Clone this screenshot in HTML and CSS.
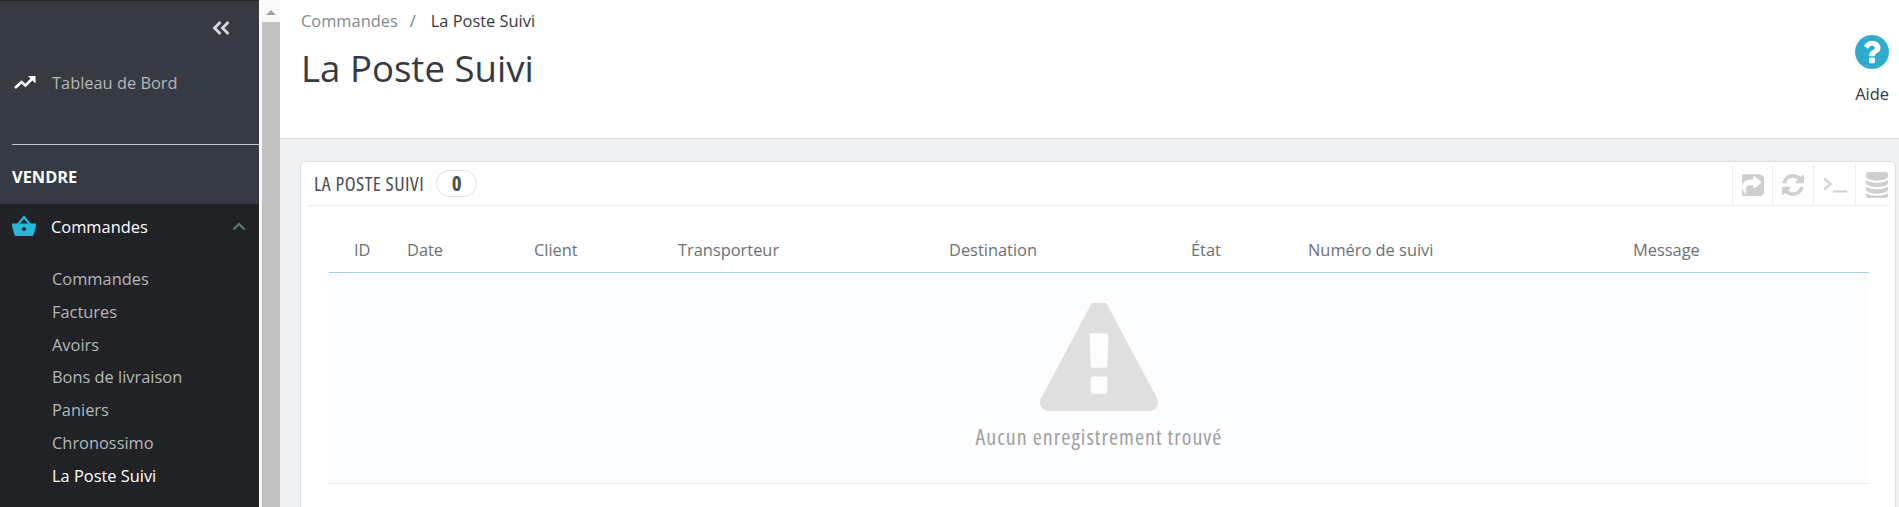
FILE: index.html
```html
<!DOCTYPE html>
<html lang="fr">
<head>
<meta charset="utf-8">
<title>La Poste Suivi</title>
<link rel="stylesheet" href="styles.css">
</head>
<body>
<div class="app">
  <nav class="sidebar">
    <div class="side-top">
      <div class="collapse"><svg width="19" height="14" viewBox="0 0 19 14"><path d="M8.500 1 2.500 7l6 6M16.500 1 10.500 7l6 6" fill="none" stroke="#d5d8dc" stroke-width="2.800"/></svg></div>
      <a class="dash"><svg class="dash-ico" width="22" height="14" viewBox="0 0 22 14"><path d="M1 13 7.500 7l4 3.500L19 3" fill="none" stroke="#fff" stroke-width="2.600"/><path d="M14 1h7.500v7.500z" fill="#fff"/></svg><span>Tableau de Bord</span></a>
      <div class="divider"></div>
      <div class="section">VENDRE</div>
    </div>
    <div class="side-active">
      <a class="parent">
        <svg class="basket" width="26" height="22" viewBox="0 0 26 22"><path d="M7 9.500 13 2l6 7.500" fill="none" stroke="#25b9d7" stroke-width="2.200"/><path d="M1 8.500h24v2.500l-2.500 9q-.3 1-1.500 1H5q-1.200 0-1.500-1L1 11z" fill="#25b9d7"/><circle cx="13" cy="14" r="2" fill="#202226"/></svg>
        <span class="parent-label">Commandes</span>
        <svg class="chev" width="14" height="9" viewBox="0 0 14 9"><path d="M1.500 7.500 7 2l5.500 5.500" fill="none" stroke="#5f7680" stroke-width="2"/></svg>
      </a>
      <ul class="sub">
        <li>Commandes</li>
        <li>Factures</li>
        <li>Avoirs</li>
        <li>Bons de livraison</li>
        <li>Paniers</li>
        <li>Chronossimo</li>
        <li class="current">La Poste Suivi</li>
      </ul>
    </div>
  </nav>
  <div class="scrollbar">
    <div class="scroll-up"><span class="arrow"></span></div>
    <div class="thumb"></div>
  </div>
  <main class="main">
    <header class="head">
      <div class="head-left">
        <div class="crumbs"><span class="crumb-link">Commandes</span><span class="crumb-sep">/</span><span class="crumb-cur">La Poste Suivi</span></div>
        <h1 class="title">La Poste Suivi</h1>
      </div>
      <a class="help">
        <svg width="34" height="34" viewBox="128 128 1536 1536"><path fill="#2eacce" d="M1024 1376v-192q0-14-9-23t-23-9h-192q-14 0-23 9t-9 23v192q0 14 9 23t23 9h192q14 0 23-9t9-23zm256-672q0-88-55.500-163t-138.500-116-170-41q-243 0-371 213-15 24 8 42l132 100q7 6 19 6 16 0 25-12 53-68 86-92 34-24 86-24 48 0 85.500 26t37.500 59q0 38-20 61t-68 45q-63 28-115.500 86.500t-52.500 125.500v36q0 14 9 23t23 9h192q14 0 23-9t9-23q0-19 21.500-49.500t54.500-49.500q32-18 49-28.500t46-35 44.500-48 28-60.500 12.500-81zm384 192q0 209-103 385.500t-279.500 279.500-385.500 103-385.500-103-279.500-279.500-103-385.500 103-385.500 279.500-279.500 385.500-103 385.500 103 279.500 279.500 103 385.500z"/></svg>
        <span>Aide</span>
      </a>
    </header>
    <section class="content">
      <div class="panel">
        <div class="panel-head">
          <span class="panel-title">LA POSTE SUIVI</span>
          <span class="badge">0</span>
          <div class="tools">
            <a class="tool"><svg width="22" height="22" viewBox="256 128 1280 1536" preserveAspectRatio="none"><path fill="#cfcfcf" d="M1005 1101l352-352q19-19 19-45t-19-45l-352-352q-30-31-69-14-40 17-40 59v160q-119 0-216 19.500t-162.500 51-114 79-76.500 95.500-44.500 109-21.500 111.500-5 110.500q0 181 167 404 11 12 25 12 7 0 13-3 22-9 19-33-44-354 62-473 46-52 130-75.500t224-23.500v160q0 42 40 59 12 5 24 5 26 0 45-19zm531-669v960q0 119-84.500 203.500t-203.500 84.500h-960q-119 0-203.500-84.500t-84.500-203.500v-960q0-119 84.500-203.500t203.500-84.500h960q119 0 203.500 84.500t84.500 203.500z" fill-rule="evenodd"/></svg></a>
            <a class="tool tool-mid"><svg width="22" height="22" viewBox="128 128 1536 1536"><path fill="#cfcfcf" d="M1639 1056q0 5-1 7-64 268-268 434.500t-478 166.500q-146 0-282.500-55t-243.500-157l-129 129q-19 19-45 19t-45-19-19-45v-448q0-26 19-45t45-19h448q26 0 45 19t19 45-19 45l-137 137q71 66 161 102t187 36q134 0 250-65t186-179q11-17 53-117 8-23 30-23h192q13 0 22.500 9.500t9.500 22.500zm25-800v448q0 26-19 45t-45 19h-448q-26 0-45-19t-19-45 19-45l138-138q-148-137-349-137-134 0-250 65t-186 179q-11 17-53 117-8 23-30 23h-199q-13 0-22.500-9.500t-9.500-22.500v-7q65-268 270-434.500t480-166.500q146 0 284 55.500t245 156.500l130-129q19-19 45-19t45 19 19 45z"/></svg></a>
            <a class="tool tool-wide"><svg width="24" height="16" viewBox="0 0 24 16"><path d="M1 1.500 8 7l-7 5.500" fill="none" stroke="#cfcfcf" stroke-width="1.800"/><path d="M10 13.500h14v2H10z" fill="#cfcfcf"/></svg></a>
            <a class="tool tool-last"><svg width="22" height="26" viewBox="128 128 1536 1536" preserveAspectRatio="none"><path fill="#cfcfcf" d="M896 768q237 0 443-43t325-127v170q0 69-103 128t-280 93.500-385 34.500-385-34.500-280-93.500-103-128v-170q119 84 325 127t443 43zm0 768q237 0 443-43t325-127v170q0 69-103 128t-280 93.500-385 34.500-385-34.500-280-93.500-103-128v-170q119 84 325 127t443 43zm0-384q237 0 443-43t325-127v170q0 69-103 128t-280 93.500-385 34.500-385-34.500-280-93.500-103-128v-170q119 84 325 127t443 43zm0-1152q208 0 385 34.500t280 93.500 103 128v128q0 69-103 128t-280 93.500-385 34.500-385-34.500-280-93.500-103-128v-128q0-69 103-128t280-93.500 385-34.500z"/></svg></a>
          </div>
        </div>
        <div class="table">
          <div class="thead">
            <span>ID</span><span>Date</span><span>Client</span><span>Transporteur</span><span>Destination</span><span>État</span><span>Numéro de suivi</span><span>Message</span>
          </div>
          <div class="empty">
            <svg class="warn" width="118" height="108" viewBox="0 64 1792 1600" preserveAspectRatio="none"><path fill="#dfdfdf" d="M1024 1375v-190q0-14-9.500-23.500t-22.500-9.500h-192q-13 0-22.500 9.500t-9.500 23.500v190q0 14 9.500 23.500t22.500 9.500h192q13 0 22.500-9.500t9.500-23.500zm-2-374l18-459q0-12-10-19-13-11-24-11h-220q-11 0-24 11-10 7-10 21l17 457q0 10 10 16.500t24 6.500h185q14 0 23.500-6.500t10.500-16.500zm-14-934l768 1408q35 63-2 126-17 29-46.500 46t-63.500 17h-1536q-34 0-63.500-17t-46.500-46q-37-63-2-126l768-1408q17-31 47-49t65-18 65 18 47 49z"/></svg>
            <div class="empty-text">Aucun enregistrement trouvé</div>
          </div>
        </div>
      </div>
    </section>
  </main>
</div>
</body>
</html>
```
FILE: styles.css
```css
* { box-sizing: border-box; }
html, body { margin: 0; padding: 0; height: 507px; overflow: hidden; background: #fff; }
body { font-family: "Open Sans", "Liberation Sans", sans-serif; font-size: 16.400px; color: #363a41; }
a { text-decoration: none; color: inherit; }

.app { display: flex; height: 507px; overflow: hidden; }

.sidebar { width: 259px; flex: none; padding-top: 1px; background: #202226; display: flex; flex-direction: column; }
.side-top { height: 203px; background: #363a42; display: flex; flex-direction: column; }
.collapse { display: flex; justify-content: flex-end; padding: 20px 28px 0 0; height: 47px; }
.dash { display: flex; align-items: center; height: 68px; padding: 0 0 0 14px; color: #b4b6b9; }
.dash-ico { margin-right: 16px; }
.divider { height: 1px; background: #bdc9cf; margin: 28px 0 0 12px; }
.section { color: #fff; font-weight: 700; padding: 21px 0 0 12px; line-height: 22px; }

.side-active { flex: 1; }
.parent { display: flex; align-items: center; height: 44px; padding: 0 0 0 11px; color: #fff; }
.basket { margin-right: 14px; }
.parent-label { flex: 1; }
.chev { margin-right: 13px; }
.sub { list-style: none; margin: 15px 0 0; padding: 0 0 0 52px; color: #b4b6b9; }
.sub li { height: 32.800px; line-height: 32.800px; }
.sub .current { color: #fff; }

.scrollbar { width: 19px; margin-left: 2px; flex: none; background: #f1f1f1; display: flex; flex-direction: column; }
.scroll-up { height: 22px; background: #f9f9f9; display: flex; justify-content: center; padding-top: 10px; }
.arrow { width: 0; height: 0; border-left: 5px solid transparent; border-right: 5px solid transparent; border-bottom: 5px solid #a3a3a3; }
.thumb { flex: 1; background: #c1c1c1; margin-left: 1px; }

.main { flex: 1; min-width: 0; background: #eff1f2; display: flex; flex-direction: column; }
.head { height: 139px; flex: none; background: #fff; border-bottom: 1px solid #dfe1e3; display: flex; justify-content: space-between; padding: 11px 10px 0 21px; }
.crumbs { display: flex; line-height: 20px; }
.crumb-link { color: #7f8a91; }
.crumb-sep { color: #6c7a80; margin: 0 15px 0 12px; }
.crumb-cur { color: #363a41; }
.title { margin: 12px 0 0; font-weight: 400; font-size: 36.600px; line-height: 50px; color: #363a41; }
.help { display: flex; flex-direction: column; align-items: center; padding-top: 24px; }
.help span { margin-top: 15px; line-height: 20px; }

.content { flex: 1; padding: 22px 3px 0 20px; }
.panel { height: 400px; background: #fff; border: 1px solid #dcdfe1; border-radius: 5px; padding: 3px 5px 0 6px; }
.panel-head { display: flex; align-items: center; height: 41px; border-bottom: 1px solid #eee; padding: 0 0 4px 7px; }
.panel-title { font-size: 20px; font-weight: 500; font-stretch: 75%; letter-spacing: .5px; color: #4a4f56; }
.badge { width: 41px; height: 27px; margin-left: 12px; border: 1px solid #dcdfe1; border-radius: 14px; display: flex; align-items: center; justify-content: center; font-size: 21px; font-weight: 700; font-stretch: 75%; color: #4a4f56; }
.tools { margin-left: auto; display: flex; height: 40px; margin-bottom: -4px; }
.tool { width: 40px; border-left: 1px solid #eee; display: flex; align-items: center; justify-content: center; }
.tool-mid { width: 41px; }
.tool-wide { width: 42px; }
.tool-last { width: 35px; justify-content: flex-end; padding-right: 2px; }

.table { margin: 0 21px 0 22px; }
.thead { display: grid; grid-template-columns: 53px 127px 144px 271px 242px 117px 325px 1fr; padding: 21px 0 0 25px; height: 67px; align-items: center; border-bottom: 1px solid #a0d3e8; color: #6c7075; }
.empty { height: 211px; background: #fcfdfe; border-bottom: 1px solid #eaeaea; display: flex; flex-direction: column; align-items: center; padding-top: 30px; }
.warn { display: block; }
.empty-text { margin-top: 12px; font-size: 22px; font-weight: 500; font-stretch: 75%; letter-spacing: 1px; color: #a0a0a0; line-height: 27px; }
```
